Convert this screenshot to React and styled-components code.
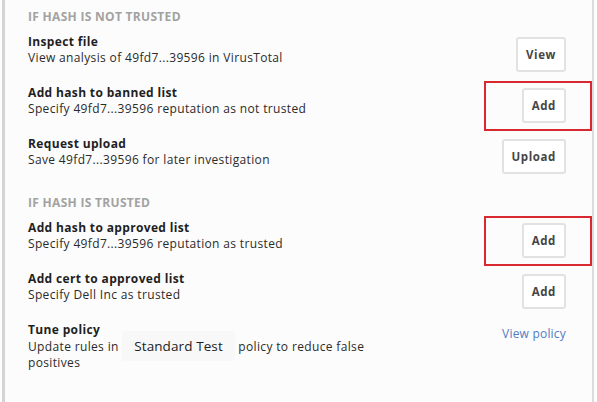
import styled, {createGlobalStyle} from "styled-components";

const GlobalStyle = createGlobalStyle`
  html, body {
    margin: 0;
    padding: 0;
    background: #fdfdfd;
  }
  body {
    font-family: "Open Sans", "Liberation Sans", sans-serif;
  }
`;

const Panel = styled.div`
  box-sizing: border-box;
  width: 592px;
  height: 402px;
  margin-left: 2px;
  padding: 9px 26px 0 23px;
  background: #fcfcfc;
  border-left: 3px solid #d4d4d4;
  border-right: 2px solid #dcdcdc;
`;

const Section = styled.section`
  display: flex;
  flex-direction: column;
  gap: 13px;

  & + & {
    margin-top: 21px;
  }
`;

const Heading = styled.h3`
  margin: 0 0 -4px;
  font-size: 12px;
  line-height: 16px;
  font-weight: 700;
  letter-spacing: 0.3px;
  text-transform: uppercase;
  color: #a2a2a2;
`;

const Row = styled.div`
  display: flex;
  justify-content: space-between;
  align-items: flex-start;
  gap: 16px;
`;

const Text = styled.div`
  font-size: 12px;
  line-height: 16px;
  letter-spacing: 0.35px;
  color: #2b2b2b;
  max-width: 385px;
`;

const Title = styled.div`
  font-weight: 700;
  color: #1f1f1f;
`;

const ActionCell = styled.div`
  position: relative;
  margin-top: ${({$offset}) => $offset ?? 3}px;

  ${({$flagged}) => $flagged && `
    &::after {
      content: "";
      position: absolute;
      inset: -7px -26px -8px -38px;
      border: 2px solid #d92830;
      pointer-events: none;
    }
  `}
`;

const Button = styled.button`
  box-sizing: border-box;
  height: 35px;
  padding: 0 8px;
  background: #ffffff;
  border: 2px solid #e2e2e2;
  border-radius: 3px;
  font-family: inherit;
  font-size: 11.5px;
  font-weight: 700;
  letter-spacing: 0.6px;
  color: #454545;
  cursor: pointer;
`;

const Link = styled.a`
  display: block;
  font-size: 12px;
  line-height: 16px;
  letter-spacing: 0.2px;
  color: #4f7dc3;
  text-decoration: none;
  cursor: pointer;
`;

const PolicyChip = styled.span`
  display: inline-block;
  margin: -7px 0;
  padding: 7px 12px;
  background: #f8f8f8;
  font-size: 13.5px;
  line-height: 16px;
  letter-spacing: 0.1px;
  color: #222;
`;

const untrusted = [
  {title: "Inspect file", desc: "View analysis of 49fd7...39596 in VirusTotal", action: "View"},
  {title: "Add hash to banned list", desc: "Specify 49fd7...39596 reputation as not trusted", action: "Add", flagged: true},
  {title: "Request upload", desc: "Save 49fd7...39596 for later investigation", action: "Upload"},
];

const trusted = [
  {title: "Add hash to approved list", desc: "Specify 49fd7...39596 reputation as trusted", action: "Add", flagged: true},
  {title: "Add cert to approved list", desc: "Specify Dell Inc as trusted", action: "Add"},
];

function ActionRow({title, desc, action, flagged}) {
  return (
    <Row>
      <Text>
        <Title>{title}</Title>
        <div>{desc}</div>
      </Text>
      <ActionCell $flagged={flagged}>
        <Button>{action}</Button>
      </ActionCell>
    </Row>
  );
}

export default function App() {
  return (
    <>
      <GlobalStyle/>
      <Panel>
        <Section>
          <Heading>If hash is not trusted</Heading>
          {untrusted.map(item => <ActionRow key={item.title} {...item}/>)}
        </Section>

        <Section>
          <Heading>If hash is trusted</Heading>
          {trusted.map(item => <ActionRow key={item.title} {...item}/>)}
          <Row>
            <Text>
              <Title>Tune policy</Title>
              <div>
                Update rules in <PolicyChip>Standard Test</PolicyChip> policy to reduce false<br/>
                positives
              </div>
            </Text>
            <ActionCell $offset={4}>
              <Link>View policy</Link>
            </ActionCell>
          </Row>
        </Section>
      </Panel>
    </>
  );
}
